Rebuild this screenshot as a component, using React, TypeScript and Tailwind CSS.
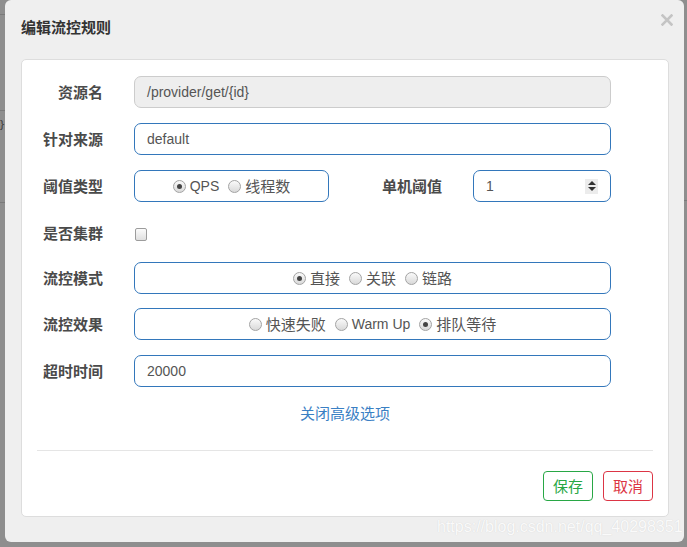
import React from 'react';

const cjk = "font-['Noto_Sans_CJK_SC',sans-serif]";
const latin = "font-['Liberation_Sans','Noto_Sans_CJK_SC',sans-serif]";

const Radio = ({ checked }: { checked?: boolean }) => (
  <span className="relative inline-flex h-[13px] w-[13px] shrink-0 items-center justify-center rounded-full border border-[#a3a3a3] bg-gradient-to-b from-[#fafafa] to-[#d9d9d9] mr-[4px]">
    {checked && <span className="h-[5px] w-[5px] rounded-full bg-[#444]" />}
  </span>
);

const Option = ({ label, checked, latinText }: { label: string; checked?: boolean; latinText?: boolean }) => (
  <span className="flex items-center ml-[9px] first:ml-0">
    <Radio checked={checked} />
    <span className={latinText ? `${latin} text-[14px]` : `${cjk} text-[15px]`}>{label}</span>
  </span>
);

const Label = ({ children, width = 'w-[66px]' }: { children: React.ReactNode; width?: string }) => (
  <div className={`${width} shrink-0 text-right ${cjk} text-[15px] font-bold text-[#4a4a4a]`}>{children}</div>
);

const boxBlue = 'h-[32px] rounded-[7px] border border-[#3377bb] bg-white';

const App = () => {
  return (
    <div className="relative h-[547px] w-[687px] overflow-hidden bg-[#8e8e8e]">
      {/* page behind the modal */}
      <div className="absolute left-0 top-[14px] h-px w-[5px] bg-[#7a7a7a]" />
      <div className="absolute left-0 top-[110px] h-px w-[5px] bg-[#7a7a7a]" />
      <div className="absolute left-0 top-[118px] text-[11px] leading-none text-[#3a3a3a]">{'}'}</div>
      <div className="absolute left-0 top-[202px] h-px w-[5px] bg-[#7a7a7a]" />
      <div className="absolute right-0 top-[200px] h-px w-[3px] bg-[#7a7a7a]" />

      <div className="relative ml-[5px] h-[542px] w-[679px] rounded-[6px] bg-[#efefef]">
        <div className="flex items-center justify-between pl-[16px] pr-[11px] pt-[17px]">
          <div className={`${cjk} text-[15px] font-bold leading-[20px] text-[#333]`}>编辑流控规则</div>
          <svg width="12" height="12" viewBox="0 0 12 12" className="-mt-[14px]">
            <path d="M1.5 1.5 L10.5 10.5 M10.5 1.5 L1.5 10.5" stroke="#c4c4c4" strokeWidth="2.6" strokeLinecap="square" />
          </svg>
        </div>

        <div className="ml-[16px] mt-[22px] w-[648px] rounded-[5px] border border-[#dddddd] bg-white px-[15px] pt-[16px] pb-[15px]">
          {/* 资源名 */}
          <div className="flex items-center h-[32px] mb-[15px]">
            <Label>资源名</Label>
            <div className={`ml-[31px] flex h-[32px] w-[477px] items-center rounded-[7px] border border-[#cccccc] bg-[#eeeeee] pl-[12px] ${latin} text-[14px] text-[#555]`}>
              /provider/get/{'{id}'}
            </div>
          </div>

          {/* 针对来源 */}
          <div className="flex items-center h-[32px] mb-[15px]">
            <Label>针对来源</Label>
            <div className={`ml-[31px] flex w-[477px] items-center pl-[12px] ${boxBlue} ${latin} text-[14px] text-[#555]`}>
              default
            </div>
          </div>

          {/* 阈值类型 + 单机阈值 */}
          <div className="flex items-center h-[32px] mb-[15px]">
            <Label>阈值类型</Label>
            <div className={`ml-[31px] flex w-[195px] items-center justify-center text-[#555] ${boxBlue}`}>
              <Option label="QPS" checked latinText />
              <Option label="线程数" />
            </div>
            <Label width="w-[113px]">单机阈值</Label>
            <div className={`ml-[31px] flex w-[138px] items-center justify-between pl-[12px] pr-[12px] ${boxBlue} ${latin} text-[14px] text-[#555]`}>
              <span>1</span>
              <span className="flex h-[15px] w-[13px] flex-col items-center justify-center gap-[2px] bg-[#ececec]">
                <span className="h-0 w-0 border-x-[4px] border-b-[4px] border-x-transparent border-b-[#333]" />
                <span className="h-0 w-0 border-x-[4px] border-t-[4px] border-x-transparent border-t-[#333]" />
              </span>
            </div>
          </div>

          {/* 是否集群 */}
          <div className="flex items-center h-[32px] mb-[13px]">
            <Label>是否集群</Label>
            <div className="ml-[32px] mt-[3px] h-[13px] w-[12px] rounded-[2px] border border-[#9c9c9c] bg-gradient-to-b from-[#fbfbfb] to-[#e0e0e0]" />
          </div>

          {/* 流控模式 */}
          <div className="flex items-center h-[32px] mb-[14px]">
            <Label>流控模式</Label>
            <div className={`ml-[31px] flex w-[477px] items-center justify-center text-[#555] ${boxBlue}`}>
              <Option label="直接" checked />
              <Option label="关联" />
              <Option label="链路" />
            </div>
          </div>

          {/* 流控效果 */}
          <div className="flex items-center h-[32px] mb-[15px]">
            <Label>流控效果</Label>
            <div className={`ml-[31px] flex w-[477px] items-center justify-center text-[#555] ${boxBlue}`}>
              <Option label="快速失败" />
              <Option label="Warm Up" latinText />
              <Option label="排队等待" checked />
            </div>
          </div>

          {/* 超时时间 */}
          <div className="flex items-center h-[32px]">
            <Label>超时时间</Label>
            <div className={`ml-[31px] flex w-[477px] items-center pl-[12px] ${boxBlue} ${latin} text-[14px] text-[#555]`}>
              20000
            </div>
          </div>

          <div className={`mt-[16px] h-[20px] text-center ${cjk} text-[15px] leading-[20px] text-[#3a80c4]`}>
            关闭高级选项
          </div>

          <div className="mt-[27px] h-px w-full bg-[#e5e5e5]" />

          <div className="mt-[20px] flex justify-end gap-[10px]">
            <button className={`h-[30px] w-[50px] rounded-[4px] border border-[#28a745] bg-white ${cjk} text-[15px] text-[#28a745]`}>保存</button>
            <button className={`h-[30px] w-[50px] rounded-[4px] border border-[#dc3545] bg-white ${cjk} text-[15px] text-[#dc3545]`}>取消</button>
          </div>
        </div>

        <div className={`absolute left-[432px] top-[516px] ${latin} text-[16px] leading-[22px] text-[#fafafa] [text-shadow:0_0_1px_#d0d0d0]`}>
          https://blog.csdn.net/qq_40298351
        </div>
      </div>
    </div>
  );
};

export default App;
